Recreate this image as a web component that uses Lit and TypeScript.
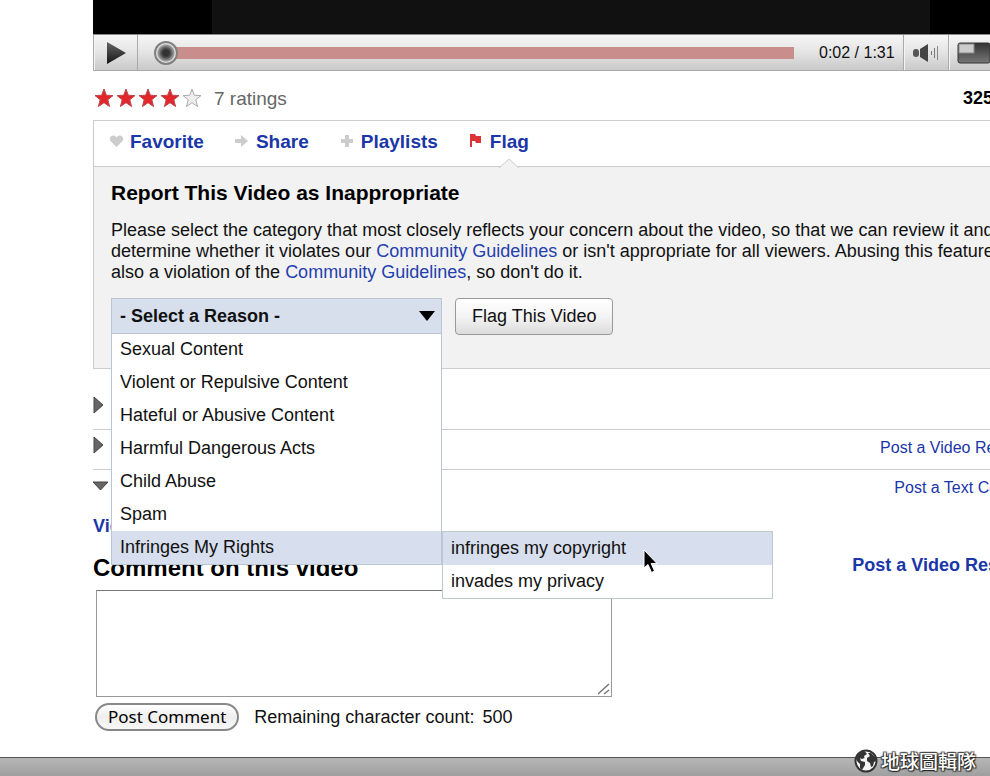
import { LitElement, html, css, svg } from "lit";
import { customElement, state } from "lit/decorators.js";

const REASONS = [
  "Sexual Content",
  "Violent or Repulsive Content",
  "Hateful or Abusive Content",
  "Harmful Dangerous Acts",
  "Child Abuse",
  "Spam",
  "Infringes My Rights",
];

const RIGHTS = ["infringes my copyright", "invades my privacy"];

@customElement("video-player")
class VideoPlayer extends LitElement {
  static styles = css`
    :host { display: block; }
    .screen { height: 34px; background: #000; padding: 0 129px 0 119px; }
    .stage { height: 100%; background: #111; }
    .controls {
      display: flex; align-items: stretch; height: 37px; box-sizing: border-box;
      border: 1px solid #aaa; border-top-color: #888;
      background: linear-gradient(#f6f6f6, #e4e4e4 50%, #c9c9c9);
    }
    button {
      border: 0; padding: 0; background: none; flex: none; width: 45px;
      display: flex; align-items: center; justify-content: center;
      border-left: 1px solid #aaa; box-shadow: inset 1px 0 #f4f4f4;
    }
    .play { width: 44px; border-left: 0; border-right: 1px solid #aaa; }
    .screen-size { width: 110px; justify-content: flex-start; padding-left: 8px; }
    .seek {
      appearance: none; flex: 1; min-width: 0; margin: 0 25px 0 16px; background: none;
    }
    .seek::-webkit-slider-runnable-track {
      height: 12px; background: linear-gradient(90deg, transparent 12px, #c98d8c 12px);
    }
    .seek::-webkit-slider-thumb {
      appearance: none; width: 24px; height: 24px; margin-top: -6px; border-radius: 50%;
      border: 2px solid #808080; box-sizing: border-box;
      background: radial-gradient(circle, #333 0 3px, #555 5px, #888 7px, #999 8px, #ddd 9px);
    }
    .time { font-size: 16px; line-height: 35px; width: 84px; color: #111; white-space: nowrap; }
  `;

  render() {
    return html`
      <div class="screen"><div class="stage"></div></div>
      <div class="controls">
        <button class="play" aria-label="Play">
          <svg width="22" height="24" viewBox="0 0 22 24">
            <defs><linearGradient id="p" x2="0" y2="1"><stop stop-color="#666" /><stop offset="1" stop-color="#151515" /></linearGradient></defs>
            <path d="M2 1 L21 12 L2 23Z" fill="url(#p)" />
          </svg>
        </button>
        <input class="seek" type="range" min="0" max="91" .value=${"0"} aria-label="Seek" />
        <span class="time">0:02 / 1:31</span>
        <button aria-label="Volume">
          <svg width="28" height="20" viewBox="0 0 28 20">
            <rect x="1" y="6" width="6" height="8" rx="3" fill="#555" />
            <path d="M8 6 L16 1 V19 L8 14Z" fill="#444" />
            <path d="M19.500 8 V12 M22.500 5 V15" stroke="#777" fill="none" />
            <path d="M25.500 3 V17" stroke="#888" fill="none" />
          </svg>
        </button>
        <button class="screen-size" aria-label="Player size">
          <svg width="34" height="22" viewBox="0 0 34 22">
            <defs><linearGradient id="s" x2="0" y2="1"><stop stop-color="#333" /><stop offset="1" stop-color="#777" /></linearGradient></defs>
            <rect x="1" y="1" width="32" height="20" rx="2" fill="url(#s)" stroke="#333" />
            <rect x="2" y="2" width="15" height="9" fill="#ccc" stroke="#888" />
          </svg>
        </button>
      </div>
    `;
  }
}

@customElement("reason-menu")
class ReasonMenu extends LitElement {
  @state() private active = REASONS.length - 1;

  static styles = css`
    :host { display: block; position: relative; width: 331px; height: 36px; }
    .label { position: absolute; width: 1px; height: 1px; overflow: hidden; clip-path: inset(50%); }
    select {
      appearance: none; display: block; width: 100%; height: 36px; margin: 0;
      padding: 0 34px 0 8px; border: 1px solid #b9c7d4; border-radius: 0;
      background: #d7dfed; color: #111; font: bold 18px "Liberation Sans", Arial, sans-serif;
      outline: 0;
    }
    .caret { position: absolute; right: 6px; top: 12px; pointer-events: none; }
    ul { list-style: none; margin: 0; padding: 0; background: #fff; border: 1px solid #b9c7d4; box-sizing: border-box; width: 331px; }
    .reasons { position: absolute; left: 0; top: 35px; z-index: 2; border-top: 0; }
    .rights { position: absolute; left: 330px; top: 0; border-color: #bccaca; }
    li { position: relative; }
    li button {
      display: block; width: 100%; height: 33px; border: 0; margin: 0; padding: 0 0 0 8px;
      text-align: left; background: none; color: #111; font: 18px "Liberation Sans", Arial, sans-serif;
    }
    .on > button { background: #d7deed; }
    .reasons > li:first-child > button { box-shadow: inset 0 1px #b9c7d4; }
    .pointer { position: absolute; left: 199px; top: 17px; z-index: 3; }
  `;

  render() {
    return html`
      <label class="label" for="reason">Reason</label>
      <select id="reason"><option>- Select a Reason -</option></select>
      <svg class="caret" width="18" height="12" viewBox="0 0 18 12"><path d="M1 1 H17 L9 11Z" fill="#000" /></svg>
      <ul class="reasons">
        ${REASONS.map((r, i) => html`
          <li class=${i === this.active ? "on" : ""}>
            <button @click=${() => (this.active = i)}>${r}</button>
            ${i === this.active && i === REASONS.length - 1 ? this.rights() : ""}
          </li>`)}
      </ul>
    `;
  }

  private rights() {
    return html`
      <ul class="rights">
        ${RIGHTS.map((r, i) => html`<li class=${i === 0 ? "on" : ""}><button>${r}</button></li>`)}
        <svg class="pointer" width="17" height="26" viewBox="0 0 17 26">
          <path d="M2 1 V19 L6 15.500 L9.500 23.500 L12.500 22 L9.200 14.500 H15Z" fill="#000" stroke="#fff" stroke-width="1" />
        </svg>
      </ul>
    `;
  }
}

const TAB_ICONS = {
  heart: svg`<path d="M7.500 13 L1.500 7 C-1 3 4.500 -1 7.500 3.500 C10.500 -1 16 3 13.500 7Z" fill="#ccc"/>`,
  arrow: svg`<path d="M0 5 H6 V1 L13 7 L6 13 V9 H0Z" fill="#ccc"/>`,
  plus: svg`<path d="M5 1 H9 V5 H13 V9 H9 V13 H5 V9 H1 V5 H5Z" fill="#ccc"/>`,
  flag: svg`<path d="M1 0 H6 L7 2 H12 V9 H7 L6 7 H3 V13 H1Z" fill="#dd3238"/>`,
};

const TABS: { name: string; icon: keyof typeof TAB_ICONS }[] = [
  { name: "Favorite", icon: "heart" },
  { name: "Share", icon: "arrow" },
  { name: "Playlists", icon: "plus" },
  { name: "Flag", icon: "flag" },
];

@customElement("app-root")
class AppRoot extends LitElement {
  static styles = css`
    :host {
      display: flex; flex-direction: column; min-height: 100vh; position: relative;
      overflow: hidden; background: #fff; color: #111;
      font: 18px/21px "Liberation Sans", Arial, "Noto Sans CJK TC", sans-serif;
    }
    a { color: #1a36a8; text-decoration: none; }
    h2, h3, p { margin: 0; }
    /* The column is wider than the window and runs off its right side. */
    .column { margin: 0 -69px 0 93px; }
    .ratings { display: flex; align-items: center; height: 49px; padding: 5px 0 0 1px; box-sizing: border-box; }
    .stars { display: flex; gap: 2px; margin-right: 12px; }
    .count { font-size: 19px; color: #666; }
    .views { margin-left: auto; width: 96px; color: #000; font-size: 18px; font-weight: bold; }
    .box { border: 1px solid #ccc; }
    .tabs { display: flex; gap: 31px; height: 46px; padding: 0 15px; box-sizing: border-box; border-bottom: 1px solid #ccc; }
    .tab { display: flex; align-items: center; gap: 6px; font-size: 19px; font-weight: bold; padding-bottom: 5px; }
    .tab svg { flex: none; }
    .name { position: relative; }
    .notch { position: absolute; left: 50%; top: 27px; margin-left: -10px; }
    .report { background: #f2f2f2; padding: 13px 29px 33px 17px; }
    h2 { font-size: 21px; line-height: 26px; margin-bottom: 14px; color: #000; }
    .report p { margin-bottom: 15px; }
    .report p a { color: #2440ae; }
    .choose { display: flex; gap: 13px; }
    .flag-button {
      height: 37px; padding: 0 16px; border: 1px solid #999; border-radius: 4px;
      background: linear-gradient(#fff, #f4f4f4 50%, #dcdcdc); color: #111;
      font: 18px "Liberation Sans", Arial, sans-serif;
    }
    .sections { padding-top: 21px; }
    .row {
      display: flex; align-items: center; justify-content: space-between; height: 40px;
      box-sizing: border-box; padding: 0 12px 5px 0; border-bottom: 1px solid #ccc; font-size: 16px;
    }
    .row:last-child { border-bottom: 0; }
    .row button { border: 0; background: none; padding: 0 0 4px; display: flex; }
    .row svg { display: block; }
    .responses { padding-top: 6px; font-weight: bold; }
    .heading { display: flex; justify-content: space-between; align-items: center; padding: 16px 8px 0 0; font-weight: bold; }
    h3 { font-size: 24px; line-height: 30px; color: #000; }
    .links { padding-bottom: 5px; }
    .field { position: relative; width: 516px; margin: 7px 0 0 3px; }
    textarea {
      display: block; width: 100%; height: 107px; box-sizing: border-box; resize: none; margin: 0;
      border: 1px solid #999; border-top-color: #777; font: 18px/21px "Liberation Sans", Arial, sans-serif; outline: 0;
    }
    .grip { position: absolute; right: 2px; bottom: 2px; pointer-events: none; }
    .post { display: flex; align-items: center; gap: 15px; padding: 6px 0 24px 2px; }
    .post-button {
      height: 28px; padding: 0 11px; border: 2px solid #888; border-radius: 14px; color: #000;
      background: linear-gradient(#fff, #eee 50%, #f8f8f8);
      font: 17px/22px "Noto Sans", sans-serif;
    }
    .remaining { display: flex; gap: 8px; }
    .footer { margin-top: auto; flex: none; height: 19px; box-sizing: border-box; border-top: 1px solid #555; background: linear-gradient(#b6b6b6, #9f9f9f); }
    .credit {
      position: absolute; right: 14px; bottom: 2px; display: flex; align-items: center; gap: 3px;
      color: #fff; font: 500 19px/26px "Noto Sans CJK TC", sans-serif;
      text-shadow: 1px 1px 1px #222, -1px -1px 1px #444, 1px -1px 1px #444, -1px 1px 1px #444;
    }
  `;

  private star(on: boolean) {
    return html`<svg width="20" height="20" viewBox="0 0 20 20">
      <path d="M10 1 L12.300 7.200 L19 7.600 L13.800 11.700 L15.600 18.600 L10 14.700 L4.400 18.600 L6.200 11.700 L1 7.600 L7.700 7.200Z"
        fill=${on ? "#e3262c" : "#eee"} stroke=${on ? "#b9494b" : "#aaa"} />
    </svg>`;
  }

  private row(open: boolean, link = "") {
    return html`<div class="row">
      <button aria-label=${open ? "Collapse section" : "Expand section"}>
        <svg width="16" height="18" viewBox="0 0 16 18">
          <path d=${open ? "M0 5 H15 L7.500 13Z" : "M1 1 L10 9 L1 17Z"} fill="#666" stroke="#444" />
        </svg>
      </button>
      ${link ? html`<a href="#">${link}</a>` : ""}
    </div>`;
  }

  render() {
    return html`
      <main class="column">
        <video-player></video-player>
        <div class="ratings">
          <span class="stars" role="img" aria-label="4 of 5 stars">${[1, 2, 3, 4, 5].map((n) => this.star(n < 5))}</span>
          <span class="count">7 ratings</span>
          <span class="views">325</span>
        </div>
        <section class="box">
          <nav class="tabs">
            ${TABS.map((t) => html`<a class="tab" href="#">
              <svg width="15" height="14" viewBox="0 0 15 14">${TAB_ICONS[t.icon]}</svg>
              <span class="name">${t.name}${t.icon === "flag"
                ? html`<svg class="notch" width="20" height="11" viewBox="0 0 20 11">
                    <path d="M0 10 L10 1 L20 10 V11 H0Z" fill="#f2f2f2" /><path d="M0 10 L10 1 L20 10" fill="none" stroke="#ccc" />
                  </svg>` : ""}</span>
            </a>`)}
          </nav>
          <div class="report">
            <h2>Report This Video as Inappropriate</h2>
            <p>Please select the category that most closely reflects your concern about the video, so that we can review it and
              determine whether it violates our <a href="#">Community Guidelines</a> or isn't appropriate for all viewers.
              Abusing this feature is also a violation of the <a href="#">Community Guidelines</a>, so don't do it.</p>
            <div class="choose">
              <reason-menu></reason-menu>
              <button class="flag-button">Flag This Video</button>
            </div>
          </div>
        </section>
        <section class="sections">
          ${this.row(false)}${this.row(false, "Post a Video Response")}${this.row(true, "Post a Text Comment")}
        </section>
        <div class="responses"><a href="#">Video Responses</a></div>
        <div class="heading">
          <h3><label for="comment">Comment on this video</label></h3>
          <a class="links" href="#">Post a Video Response</a>
        </div>
        <div class="field">
          <textarea id="comment"></textarea>
          <svg class="grip" width="12" height="12" viewBox="0 0 12 12"><path d="M0 11 L11 1 M6 11 L11 7" stroke="#777" stroke-width="1.500" fill="none" /></svg>
        </div>
        <div class="post">
          <button class="post-button">Post Comment</button>
          <span class="remaining"><span>Remaining character count:</span><span>500</span></span>
        </div>
      </main>
      <footer class="footer"></footer>
      <div class="credit">
        <svg width="24" height="24" viewBox="0 0 24 24">
          <circle cx="12" cy="12" r="10.500" fill="#f4f4f4" stroke="#333" stroke-width="2" />
          <path d="M3 8 C5 4 8 2 11 2.500 L13 5 L10 7 L10.500 9 L8 10 L6 9 L7 12 L11 13 L11 16 L8 21 L6 19 L6 15 L3 12Z" fill="#333" />
          <path d="M14 4 L17 4 L21 8 L22 12 L20 13 L19 17 L17 18 L16 14 L13 12 L13 9 L16 7Z" fill="#333" />
        </svg>
        <span>地球圖輯隊</span>
      </div>
    `;
  }
}
